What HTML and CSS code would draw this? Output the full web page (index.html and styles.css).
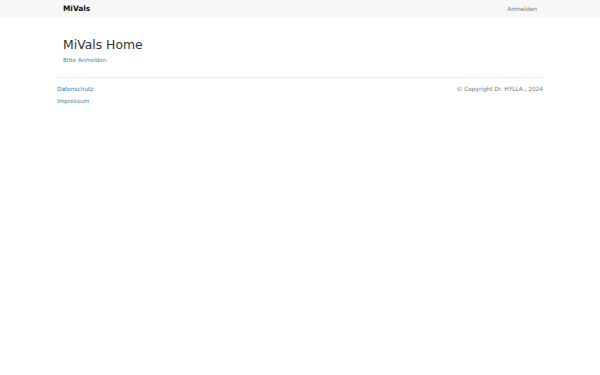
FILE: index.html
```html
<!DOCTYPE html>
<html lang="de">
<head>
<meta charset="utf-8">
<title>MiVals Home</title>
<link rel="stylesheet" href="styles.css">
</head>
<body>
<nav class="navbar">
  <div class="container nav-inner">
    <a class="brand" href="#">MiVals</a>
    <a class="nav-link" href="#">Anmelden</a>
  </div>
</nav>
<main class="container main">
  <h1 class="title">MiVals Home</h1>
  <p class="lead"><a href="#">Bitte Anmelden.</a></p>
</main>
<footer class="container footer">
  <div class="footer-links">
    <a href="#">Datenschutz</a>
    <a href="#">Impressum</a>
  </div>
  <div class="copy">© Copyright Dr. HYLLA., 2024</div>
</footer>
</body>
</html>
```
FILE: styles.css
```css
* { box-sizing: border-box; }
body {
  margin: 0;
  font-family: "DejaVu Sans", sans-serif;
  color: #333;
  background: #fff;
}
a { text-decoration: none; color: #3a7bb5; }
.container {
  width: 486px;
  margin: 0 auto;
}
.navbar {
  background: #f7f7f7;
  height: 17px;
}
.nav-inner {
  display: flex;
  justify-content: space-between;
  align-items: center;
  height: 17px;
  padding: 0 6px;
}
.brand {
  font-weight: bold;
  font-size: 7.4px;
  color: #111;
}
.nav-link {
  font-size: 5.9px;
  color: #777;
}
.main {
  padding: 20px 6px 13px;
  border-bottom: 1px solid #eee;
}
.title {
  margin: 0;
  font-size: 12.4px;
  font-weight: normal;
  line-height: 16px;
}
.lead {
  margin: 3px 0 0;
  font-size: 5.6px;
  line-height: 8px;
}
.footer {
  display: flex;
  justify-content: space-between;
  padding-top: 7px;
  font-size: 5.8px;
}
.footer-links {
  display: flex;
  flex-direction: column;
  gap: 4px;
  line-height: 8px;
}
.copy {
  color: #777;
  line-height: 8px;
}
```
